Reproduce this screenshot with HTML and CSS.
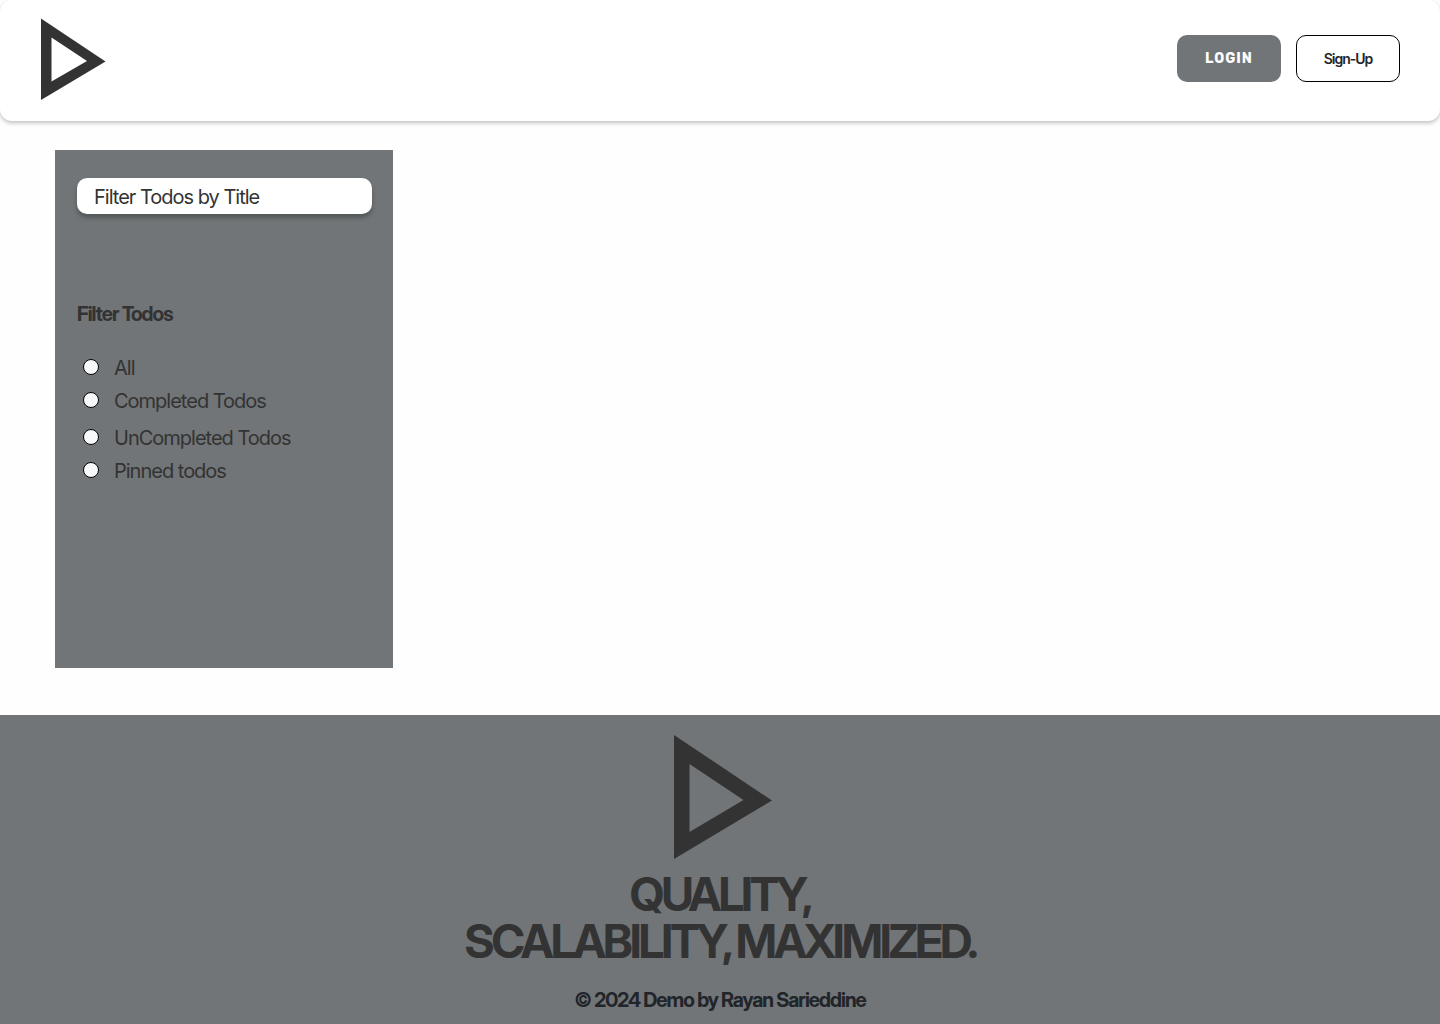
FILE: index.html
```html
<!DOCTYPE html>
<html lang="en">
<head>
<meta charset="utf-8">
<meta name="viewport" content="width=device-width, initial-scale=1">
<title>Todos</title>
<link rel="stylesheet" href="styles.css">
</head>
<body>
<header class="topbar">
  <a class="brand" href="#" aria-label="Home">
    <svg class="brand-logo" viewBox="0 0 65 82" aria-hidden="true"><path fill-rule="evenodd" d="M0 0.5 64.5 43.5 0 82ZM10.5 19.5V63.5L46 43Z"/></svg>
  </a>
  <nav class="account">
    <button class="btn btn-login" type="button">LOGIN</button>
    <button class="btn btn-signup" type="button">Sign-Up</button>
  </nav>
</header>
<main class="content">
  <form class="filters">
    <input class="search" type="text" placeholder="Filter Todos by Title" aria-label="Filter Todos by Title">
    <fieldset class="options">
      <legend class="options-title">Filter Todos</legend>
      <div class="option-group">
        <label class="option"><input class="radio" type="radio" name="filter">All</label>
        <label class="option"><input class="radio" type="radio" name="filter">Completed Todos</label>
      </div>
      <div class="option-group">
        <label class="option"><input class="radio" type="radio" name="filter">UnCompleted Todos</label>
        <label class="option"><input class="radio" type="radio" name="filter">Pinned todos</label>
      </div>
    </fieldset>
  </form>
</main>
<footer class="footer">
  <svg class="footer-logo" viewBox="0 0 98 124" aria-hidden="true"><path fill-rule="evenodd" d="M0 0 98 65.5 0 124ZM15.5 29V97L69.5 65Z"/></svg>
  <p class="slogan">QUALITY,<br>SCALABILITY, MAXIMIZED.</p>
  <p class="copyright">© 2024 Demo by Rayan Sarieddine</p>
</footer>
</body>
</html>
```
FILE: styles.css
```css
* { box-sizing: border-box; }

body {
  margin: 0;
  min-height: 100vh;
  display: flex;
  flex-direction: column;
  background: #fefefe;
  color: #333;
  font-family: Inter, "Liberation Sans", sans-serif;
  font-size: 20px;
  line-height: 24px;
  letter-spacing: -1px;
}

.topbar {
  display: flex;
  justify-content: space-between;
  align-items: flex-start;
  padding: 18px 40px 21px 41px;
  background: #fff;
  border-radius: 12px;
  box-shadow: 0 2px 4px rgba(0, 0, 0, 0.25);
}

.brand { display: block; }
.brand-logo { display: block; width: 65px; height: 82px; fill: #333; }

.account { display: flex; gap: 15px; padding-top: 17px; }

.btn {
  width: 104px;
  height: 47px;
  padding: 0;
  border-radius: 10px;
  font-size: 14px;
  cursor: pointer;
}
.btn-login {
  border: 0;
  background: #717577;
  color: #fefefe;
  font-family: Rubik, Roboto, sans-serif;
  font-weight: 700;
  letter-spacing: 1px;
}
.btn-signup {
  border: 1px solid #000;
  background: #fff;
  color: #212529;
  font-family: inherit;
  font-weight: 600;
  letter-spacing: -1px;
}

.content { flex: 1; padding: 29px 55px 47px; }

.filters {
  width: 338px;
  max-width: 100%;
  min-height: 518px;
  padding: 28px 21px 28px 22px;
  background: #717577;
}

.search {
  display: block;
  width: 100%;
  height: 36px;
  padding: 2px 17px 0;
  border: 0;
  border-radius: 10px;
  background: #fff;
  box-shadow: 0 4px 4px rgba(0, 0, 0, 0.25);
  color: #333;
  font: inherit;
  letter-spacing: inherit;
}
.search::placeholder { color: #333; opacity: 1; }

.options-title,
.slogan,
.copyright {
  font-family: "Inter Display", Inter, "Liberation Sans", sans-serif;
  font-weight: 700;
}

.options { margin: 88px 0 0; padding: 0; border: 0; }
.options-title { padding: 0 0 25px; }

.option-group + .option-group { margin-top: 4px; }
.option {
  display: flex;
  align-items: center;
  gap: 15px;
  height: 33px;
  padding-left: 6px;
}
.radio {
  appearance: none;
  width: 16px;
  height: 16px;
  margin: 0 0 2px;
  border: 1px solid #000;
  border-radius: 50%;
  background: #f8f9fa;
}
.radio:checked { background: #333; }

.footer {
  display: flex;
  flex-direction: column;
  align-items: center;
  padding: 20px 20px 13px;
  background: #717577;
  text-align: center;
}
.footer-logo { display: block; width: 98px; height: 124px; margin-left: 6px; fill: #333; }
.slogan {
  margin: 12px 0 23px;
  font-size: 46px;
  line-height: 47px;
  letter-spacing: -3px;
}
.copyright { margin: 0; color: #212529; }
```
